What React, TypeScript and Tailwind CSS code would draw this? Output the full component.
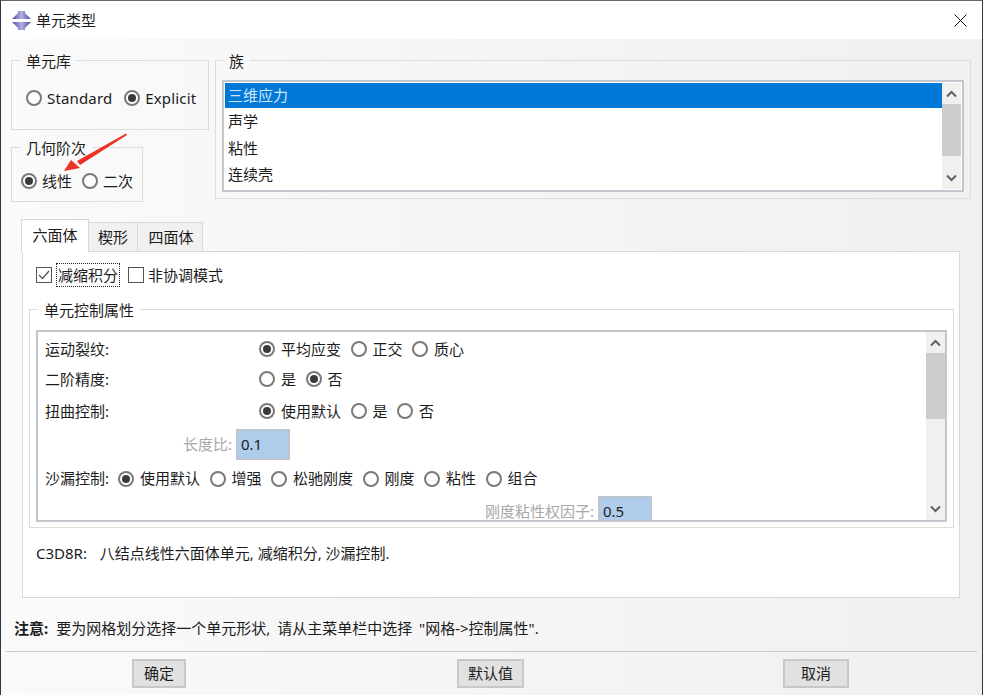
import * as React from "react";

type Opt = { label: string; on?: boolean };

function Radio({ label, on, labelGap }: Opt & { labelGap: string }) {
  return (
    <span className={`flex items-center ${labelGap}`}>
      <span className="flex h-4 w-4 shrink-0 items-center justify-center rounded-full border-2 border-[#7a7a7a] bg-white">
        {on ? <span className="h-2 w-2 rounded-full bg-[#3a3a3a]" /> : null}
      </span>
      <span>{label}</span>
    </span>
  );
}

function RadioRow({
  options,
  gap = "gap-[9.5px]",
  labelGap = "gap-[6px]"
}: {
  options: Opt[];
  gap?: string;
  labelGap?: string;
}) {
  return (
    <div className={`flex items-center ${gap}`}>
      {options.map((o) => (
        <Radio key={o.label} labelGap={labelGap} {...o} />
      ))}
    </div>
  );
}

function Group({
  title,
  className,
  legendClass,
  children
}: {
  title: string;
  className: string;
  legendClass: string;
  children: React.ReactNode;
}) {
  return (
    <fieldset className={`border border-[#dcdcdc] ${className}`}>
      <legend className={`relative top-[1px] px-[6px] text-[15px] leading-6 ${legendClass}`}>{title}</legend>
      {children}
    </fieldset>
  );
}

function Scrollbar({ thumbTop, thumbHeight }: { thumbTop: number; thumbHeight: number }) {
  return (
    <div className="flex w-[19px] shrink-0 flex-col bg-[#f0f0f0]">
      <div className="relative flex-1">
        <svg className="absolute left-[4px] top-[7px]" width="11" height="8" viewBox="0 0 11 8">
          <path d="M1 6.5 L5.5 2 L10 6.5" fill="none" stroke="#606060" strokeWidth="2" />
        </svg>
        <div
          className="absolute left-0 w-full bg-[#cdcdcd]"
          style={{ top: thumbTop, height: thumbHeight }}
        />
        <svg className="absolute bottom-[7px] left-[4px]" width="11" height="8" viewBox="0 0 11 8">
          <path d="M1 1.5 L5.5 6 L10 1.5" fill="none" stroke="#606060" strokeWidth="2" />
        </svg>
      </div>
    </div>
  );
}

function DialogButton({ label, className }: { label: string; className: string }) {
  return (
    <button
      className={`flex h-[29px] items-center justify-center border-2 border-[#c8c8c8] bg-[#e1e1e1] text-[15px] ${className}`}
    >
      {label}
    </button>
  );
}

function ValueBox({ value }: { value: string }) {
  return (
    <div className="flex h-[31px] w-[54px] shrink-0 items-center border-2 border-[#bcc6d2] bg-[#afcdeb] pl-[3px] text-[15px]">
      {value}
    </div>
  );
}

export default function App() {
  return (
    <div className="relative flex h-[695px] w-[983px] flex-col overflow-hidden border-x border-t border-x-[#2b3846] border-t-[#666] bg-gradient-to-r from-[#fafafa] to-[#f0f0f0] font-['Noto_Sans','Noto_Sans_CJK_SC',sans-serif] text-[#1c1c1c]">
      <div className="flex h-[38px] shrink-0 items-center bg-white pl-[11px] text-[15px]">
        <svg width="19" height="19" viewBox="0 0 19 19">
          <defs>
            <linearGradient id="titleIcon" x1="0" y1="0" x2="1" y2="0">
              <stop offset="0" stopColor="#4f4ba6" />
              <stop offset="0.5" stopColor="#b0aee0" />
              <stop offset="1" stopColor="#4f4ba6" />
            </linearGradient>
          </defs>
          <path d="M6 0 H13 V2 L16 5 L19 8 H0 L3 5 L6 2 Z" fill="url(#titleIcon)" />
          <path d="M0 11 H19 L16 14 L13 17 V19 H6 V17 L3 14 Z" fill="url(#titleIcon)" />
        </svg>
        <span className="ml-[5px]">单元类型</span>
        <svg className="ml-auto mr-[15px]" width="13" height="13" viewBox="0 0 13 13">
          <path d="M0.5 0.5 L12.5 12.5 M12.5 0.5 L0.5 12.5" stroke="#111" strokeWidth="1" />
        </svg>
      </div>

      <div className="flex flex-1 flex-col pt-[9px]">
        <div className="flex h-[154px] pl-[10px]">
          <div className="flex w-[198px] flex-col">
            <Group title="单元库" legendClass="ml-[8px]" className="h-[82px]">
              <div className="mt-[15px] pl-[14px] text-[15px] tracking-[0.15px]">
                <RadioRow
                  gap="gap-[12px]"
                  labelGap="gap-[5px]"
                  options={[{ label: "Standard" }, { label: "Explicit", on: true }]}
                />
              </div>
            </Group>
            <Group title="几何阶次" legendClass="ml-[8px]" className="mt-[5px] h-[67px] w-[132px]">
              <div className="mt-[11px] pl-[9px] text-[15px]">
                <RadioRow
                  gap="gap-[10px]"
                  labelGap="gap-[5px]"
                  options={[{ label: "线性", on: true }, { label: "二次" }]}
                />
              </div>
            </Group>
          </div>

          <Group title="族" legendClass="ml-[1px]" className="ml-[6px] h-[151px] w-[756px] px-[6px]">
            <div className="mt-[8px] flex h-[112px] border-2 border-[#c3c6cc] bg-white p-px text-[15px]">
              <div className="flex-1">
                <div className="flex h-[25px] items-center bg-[#0078d7] pl-[3px] text-[#cfe6fa]">三维应力</div>
                <div className="flex h-[27px] items-center pl-[3px]">声学</div>
                <div className="flex h-[26px] items-center pl-[3px]">粘性</div>
                <div className="flex h-[26px] items-center pl-[3px]">连续壳</div>
              </div>
              <Scrollbar thumbTop={21} thumbHeight={52} />
            </div>
          </Group>
        </div>

        <div className="ml-[20px] mt-[17px] flex h-[32px] items-end text-[15px]">
          <div className="z-10 -mb-px flex h-[33px] w-[68px] items-center justify-center border-x border-t border-[#d9d9d9] bg-white pb-[2px]">六面体</div>
          <div className="flex h-[29px] w-[49px] items-center justify-center border-t border-r border-[#d9d9d9] bg-[#f0f0f0]">楔形</div>
          <div className="flex h-[29px] w-[65px] items-center justify-center border-t border-r border-[#d9d9d9] bg-[#f0f0f0] pl-[2px]">四面体</div>
        </div>

        <div className="ml-[21px] h-[347px] w-[938px] border border-[#d9d9d9] bg-white px-[6px] text-[15px]">
          <div className="flex h-[46px] items-center pl-[7px]">
            <span className="flex h-[16px] w-[16px] items-center justify-center border border-[#555] bg-white">
              <svg width="12" height="10" viewBox="0 0 12 10">
                <path d="M1 5 L4.5 8.5 L11 1" fill="none" stroke="#555" strokeWidth="1.3" />
              </svg>
            </span>
            <span className="ml-[4px] border border-dotted border-[#222] px-px leading-[22px]">减缩积分</span>
            <span className="ml-[8px] h-[16px] w-[16px] border border-[#555] bg-white" />
            <span className="ml-[4px]">非协调模式</span>
          </div>

          <Group title="单元控制属性" legendClass="ml-[2px]" className="-mt-[1px] h-[231px] w-[925px] px-[6px]">
            <div className="mt-[9px] flex h-[192px] border-2 border-[#c3c6cc] bg-white">
              <div className="flex-1 overflow-hidden pl-[7px]">
                <div className="mt-[2px] flex h-[30px] items-center">
                  <span className="w-[214px]">运动裂纹:</span>
                  <RadioRow options={[{ label: "平均应变", on: true }, { label: "正交" }, { label: "质心" }]} />
                </div>
                <div className="flex h-[30px] items-center">
                  <span className="w-[214px]">二阶精度:</span>
                  <RadioRow options={[{ label: "是" }, { label: "否", on: true }]} />
                </div>
                <div className="flex h-[34px] items-center">
                  <span className="w-[214px]">扭曲控制:</span>
                  <RadioRow options={[{ label: "使用默认", on: true }, { label: "是" }, { label: "否" }]} />
                </div>
                <div className="flex h-[33px] items-center">
                  <span className="w-[191px] pr-[4px] text-right text-[#a8a8a8]">长度比:</span>
                  <ValueBox value="0.1" />
                </div>
                <div className="flex h-[35px] items-center">
                  <span className="w-[73px]">沙漏控制:</span>
                  <RadioRow
                    options={[
                      { label: "使用默认", on: true },
                      { label: "增强" },
                      { label: "松驰刚度" },
                      { label: "刚度" },
                      { label: "粘性" },
                      { label: "组合" }
                    ]}
                  />
                </div>
                <div className="flex h-[31px] items-center">
                  <span className="w-[553px] pr-[4px] text-right text-[#a8a8a8]">刚度粘性权因子:</span>
                  <ValueBox value="0.5" />
                </div>
              </div>
              <Scrollbar thumbTop={21} thumbHeight={66} />
            </div>
          </Group>

          <p className="mt-[15px] pl-[7px] text-[15px] leading-5">
            <span className="mr-[5px]">C3D8R:&nbsp;</span> 八结点线性六面体单元, 减缩积分, 沙漏控制.
          </p>
        </div>

        <p className="mt-[20px] pl-[13px] text-[15px] leading-5 [word-spacing:3px]">
          <span className="font-bold">注意:</span>
          <span className="ml-[8px]">要为网格划分选择一个单元形状, 请从主菜单栏中选择 "网格-&gt;控制属性".</span>
        </p>

        <div className="mx-[5px] mt-[13px] border-t border-[#c8c8c8]" />

        <div className="mt-[7px] flex pl-[131px]">
          <DialogButton label="确定" className="w-[54px]" />
          <DialogButton label="默认值" className="ml-[271px] w-[67px]" />
          <DialogButton label="取消" className="ml-[259px] w-[66px]" />
        </div>
      </div>

      {/* red annotation arrow drawn over the dialog */}
      <svg className="absolute left-[60px] top-[131px]" width="68" height="42" viewBox="0 0 68 42">
        <path d="M65 1.5 L16 29 L19 33 L66 3 Z M3 39 L10 28 L19 36 Z" fill="#ee3124" />
      </svg>
    </div>
  );
}
